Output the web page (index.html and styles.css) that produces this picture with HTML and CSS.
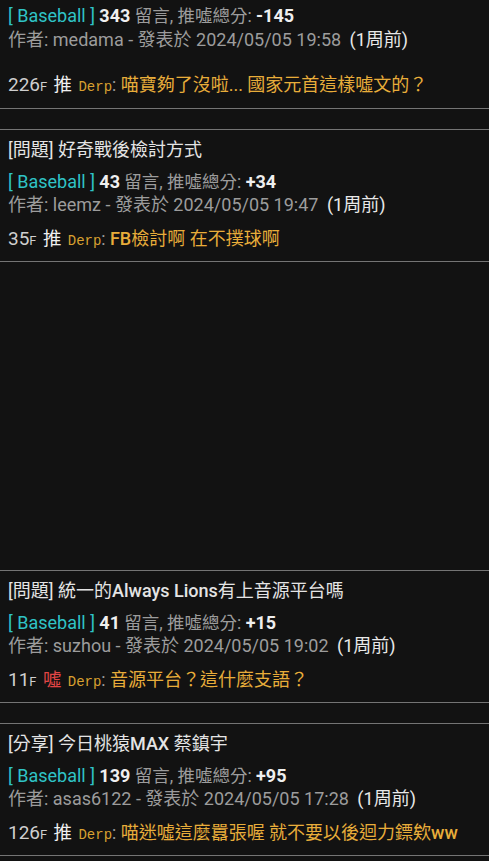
FILE: index.html
```html
<!DOCTYPE html>
<html lang="zh-Hant">
<head>
<meta charset="utf-8">
<title>Baseball</title>
<link rel="stylesheet" href="styles.css">
</head>
<body>
<div class="list">
  <div class="post post-first">
    <div class="meta"><span class="board">[ Baseball ]</span> <b class="num">343</b> 留言, 推噓總分: <b class="num">-145</b></div>
    <div class="author">作者: medama - 發表於 2024/05/05 19:58 <span class="ago">(1周前)</span></div>
    <div class="push push-gap"><span class="floor">226<small>F</small></span> <span class="tag up">推</span> <span class="user">Derp</span>: <span class="text">喵寶夠了沒啦... 國家元首這樣噓文的？</span></div>
  </div>

  <div class="post">
    <div class="title">[問題] 好奇戰後檢討方式</div>
    <div class="meta"><span class="board">[ Baseball ]</span> <b class="num">43</b> 留言, 推噓總分: <b class="num">+34</b></div>
    <div class="author">作者: leemz - 發表於 2024/05/05 19:47 <span class="ago">(1周前)</span></div>
    <div class="push"><span class="floor">35<small>F</small></span> <span class="tag up">推</span> <span class="user">Derp</span>: <span class="text"><span class="lat">FB</span>檢討啊 在不撲球啊</span></div>
  </div>

  <div class="spacer"></div>

  <div class="post">
    <div class="title">[問題] 統一的<span class="lat">Always Lions</span>有上音源平台嗎</div>
    <div class="meta"><span class="board">[ Baseball ]</span> <b class="num">41</b> 留言, 推噓總分: <b class="num">+15</b></div>
    <div class="author">作者: suzhou - 發表於 2024/05/05 19:02 <span class="ago">(1周前)</span></div>
    <div class="push"><span class="floor">11<small>F</small></span> <span class="tag down">噓</span> <span class="user">Derp</span>: <span class="text">音源平台？這什麼支語？</span></div>
  </div>

  <div class="post">
    <div class="title">[分享] 今日桃猿<span class="lat">MAX</span> 蔡鎮宇</div>
    <div class="meta"><span class="board">[ Baseball ]</span> <b class="num">139</b> 留言, 推噓總分: <b class="num">+95</b></div>
    <div class="author">作者: asas6122 - 發表於 2024/05/05 17:28 <span class="ago">(1周前)</span></div>
    <div class="push"><span class="floor">126<small>F</small></span> <span class="tag up">推</span> <span class="user">Derp</span>: <span class="text">喵迷噓這麼囂張喔 就不要以後迴力鏢欸<span class="lat">ww</span></span></div>
  </div>
</div>
</body>
</html>
```

FILE: styles.css
```css
html, body {
  margin: 0;
  padding: 0;
  background: #121212;
}
body {
  font-family: Roboto, "Noto Sans CJK TC", sans-serif;
  color: #9c9c9c;
  font-size: 17.5px;
}
.list {
  display: flex;
  flex-direction: column;
}
.post {
  border-top: 1px solid #747474;
  border-bottom: 1px solid #747474;
  padding: 7px 8px 11px;
  margin-bottom: 20px;
}
.post-first {
  border-top: none;
  padding-top: 5px;
  padding-bottom: 12px;
}
.title {
  color: #e4e4e4;
  font-size: 18px;
  line-height: 26px;
  height: 26px;
  margin-bottom: 8px;
  white-space: nowrap;
}
.lat {
  font-weight: 500;
}
.meta {
  line-height: 22px;
  height: 22px;
  font-size: 17.5px;
  white-space: nowrap;
}
.board {
  color: #2fc3c6;
  font-size: 18px;
}
.num {
  color: #efefef;
  font-weight: bold;
  font-size: 18px;
}
.author {
  line-height: 24px;
  height: 24px;
  font-size: 18px;
  white-space: nowrap;
}
.post-first .author {
  margin-top: 1px;
}
.ago {
  color: #e8e8e8;
  margin-left: 4px;
}
.push {
  line-height: 22px;
  height: 22px;
  margin-top: 11px;
  white-space: nowrap;
}
.post-first .push-gap {
  margin-top: 22px;
}
.floor {
  color: #cfcfcf;
  font-size: 19px;
}
.floor small {
  font-size: 13px;
}
.tag {
  font-size: 18.5px;
  margin: 0 2px;
}
.tag.up {
  color: #f0f0f0;
}
.tag.down {
  color: #e24545;
}
.user {
  font-family: "Liberation Mono", monospace;
  font-size: 14px;
  color: #d8a030;
}
.text {
  color: #e8ad3a;
  font-size: 18px;
}
.spacer {
  height: 288px;
}
```
